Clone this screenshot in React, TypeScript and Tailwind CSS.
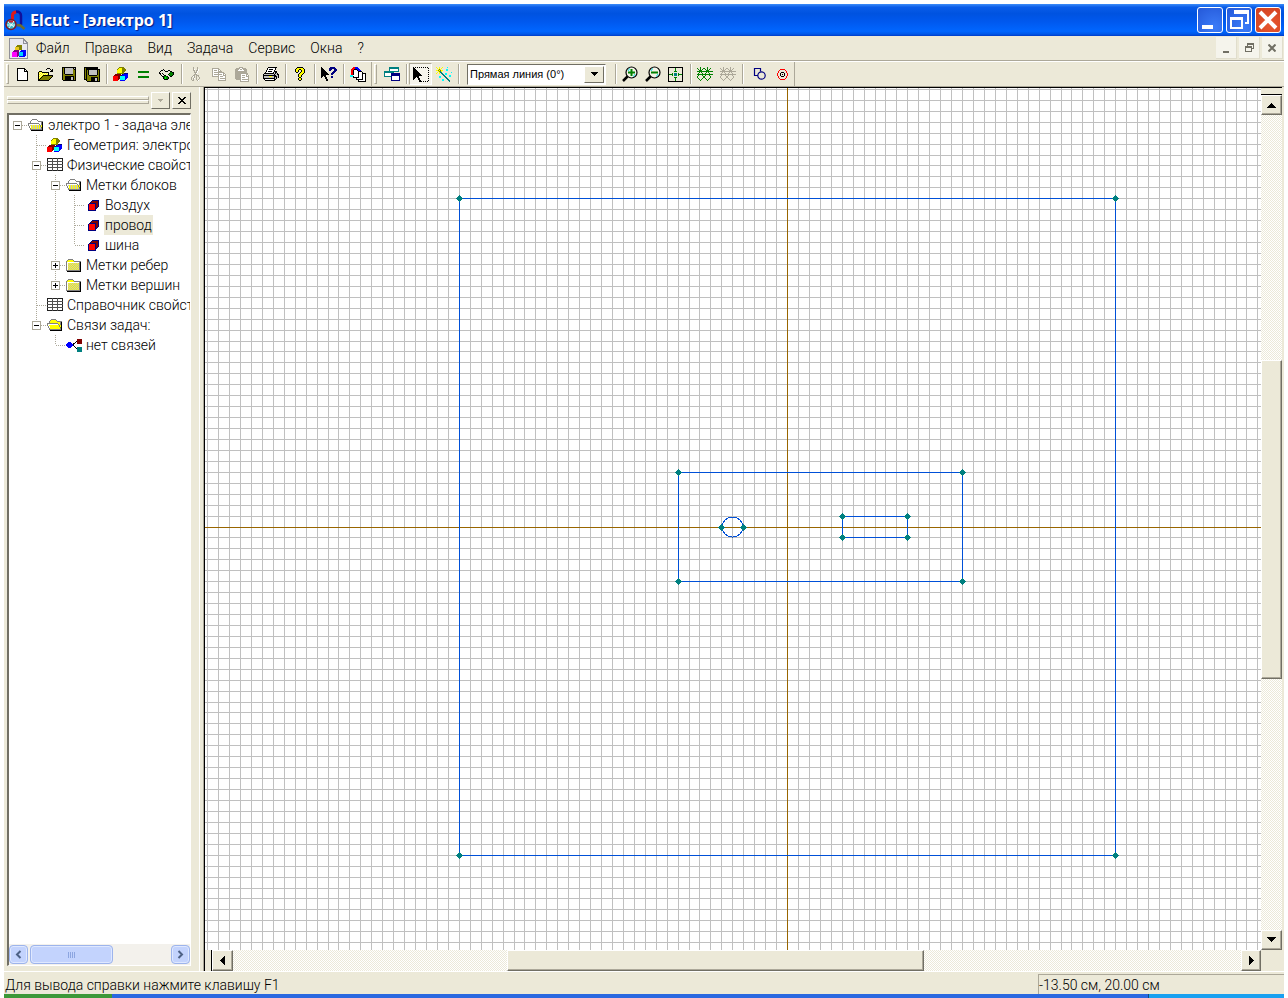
import React, { ReactNode } from "react";

/* ---------- pixel icons ---------- */

const PALETTE: Record<string, string> = {
  k: "#000000",
  w: "#ffffff",
  y: "#ffff00",
  o: "#808000",
  n: "#000080",
  b: "#0000ff",
  c: "#00ffff",
  t: "#008080",
  r: "#ff0000",
  m: "#800000",
  g: "#aca899",
  s: "#c0c0c0",
  d: "#808080",
  e: "#008000",
  l: "#00ff00",
  p: "#fff8a0",
};

function Pixels({ rows }: { rows: string[] }) {
  const width = Math.max(...rows.map((r) => r.length));
  return (
    <svg
      width={width}
      height={rows.length}
      viewBox={`0 0 ${width} ${rows.length}`}
      shapeRendering="crispEdges"
      className="shrink-0"
      aria-hidden="true"
    >
      {rows.flatMap((row, y) =>
        [...row].map((ch, x) =>
          PALETTE[ch] ? <rect key={`${x}-${y}`} x={x} y={y} width="1" height="1" fill={PALETTE[ch]} /> : null
        )
      )}
    </svg>
  );
}

const NEW = [
  "kkkkkkkk...",
  "kwwwwwwkk..",
  "kwwwwwwkwk.",
  "kwwwwwwkkkk",
  "kwwwwwwwwwk",
  "kwwwwwwwwwk",
  "kwwwwwwwwwk",
  "kwwwwwwwwwk",
  "kwwwwwwwwwk",
  "kwwwwwwwwwk",
  "kwwwwwwwwwk",
  "kwwwwwwwwwk",
  "kkkkkkkkkkk",
];
const OPEN = [
  ".........kkk...",
  "........k...k.k",
  ".............kk",
  ".kkk........kkk",
  "kypykkkkkkk....",
  "kpypypypypk....",
  "kypypypypyk....",
  "kpypykkkkkkkkkk",
  "kypykoooooooook",
  "kpykoooooooook.",
  "kykoooooooook..",
  "kkoooooooook...",
  "kkkkkkkkkkk....",
];
const SAVE = [
  "kkkkkkkkkkkkkk",
  "kokssssssssksk",
  "kokssssssssokk",
  "kokssssssssook",
  "kokssssssssook",
  "kokssssssssook",
  "kokssssssssook",
  "kookkkkkkkkook",
  "kooooooooooook",
  "kookkkkkkkkkok",
  "kookkkkkksskok",
  "kookkkkkksskok",
  "kookkkkkksskok",
  ".kkkkkkkkkkkkk",
];
const SAVE_ALL = [
  "kkkkkkkkkkkkkk..",
  "kokkkkkkkkkkkk..",
  "kokkkkkkkkkkkkkk",
  "kokoksssssssskok",
  "kokoksssssssskok",
  "kokoksssssssskok",
  "kokoksssssssskok",
  "kokoksssssssskok",
  "kokookkkkkkkkook",
  "kokooooooooooook",
  "kokooookkkkkkkok",
  "kokooookkkksskok",
  "kkkooookkkksskok",
  "..kooookkkksskok",
  "...kkkkkkkkkkkkk",
];
const BLOCKS = [
  "......ooooo....",
  ".....oyyyooo...",
  "....oyyyyoooo..",
  "....yyyyyoooo..",
  "....yyyyyooo...",
  "....yyyyyoo....",
  "....ooooooonnnn",
  "..mmmmmm.nbbbbb",
  ".mmmmmmmnbbbbbb",
  "rrrrrmmcccccbbb",
  "rrrrrmmcccccbbb",
  "rrrrrmmcccccbb.",
  "rrrrrm.cccccb..",
  "rrrrr..bbbbb...",
];
const EQUALS = ["eeeeeeeeeee", "eeeeeeeeeee", "...........", "...........", "...........", "eeeeeeeeeee", "eeeeeeeeeee"];
const GLASSES = [
  "....k..........",
  "..kk.k...kk....",
  ".k....kkk..kk..",
  "k..........eekk",
  "kk.k......keeek",
  ".k..k....kleeek",
  "..k..kk...keek.",
  "...kkeeek..kk..",
  "....keleek.....",
  "....keleek.....",
  ".....kkkk......",
];
const CUT = [
  "..g...g..",
  "..g...g..",
  "..gw..gw.",
  "..gg.ggw.",
  "...g.gw..",
  "...gggw..",
  "....gw...",
  "...ggg...",
  "..gg.ggg.",
  ".gwg.g.g.",
  "g..g.g..g",
  "g.gw.g..g",
  "g.g..g.g.",
  ".gg...gw.",
];
const COPY = [
  "ggggggg.......",
  "gwwwwwgg......",
  "gwgggwgwg.....",
  "gwwwwwgggg....",
  "gwgggggggggg..",
  "gwwwwwgwwwwgg.",
  "gwggggggggwgwg",
  "gwwwwwgwwwwggg",
  "gggggggwgggwwg",
  "......gwwwwwwg",
  "......gwgggggg",
  "......gwwwwwwg",
  "......gggggggg",
];
const PASTE = [
  ".....gggg......",
  "..ggggwwgggg...",
  ".ggggwggwgggg..",
  ".gggwwwwwwggg..",
  ".gggggggggggg..",
  ".gggggggggggg..",
  ".ggggggggggggg.",
  ".ggggggwwwwwgg.",
  ".ggggggwgggwgwg",
  ".ggggggwwwwwggg",
  ".ggggggwgggwwwg",
  ".ggggggwwwwwwwg",
  "..gggggwggggggg",
  "......gwwwwwwwg",
  "......ggggggggg",
];
const PRINT = [
  ".....kkkkkkkkk..",
  "....kwwwwwwwk...",
  "....kwkkkkwwk...",
  "...kwwwwwwwk....",
  "...kwkkkkwwkkk..",
  "..kwwwwwwwkskk..",
  ".kkkkkkkkkksksk.",
  "kssssssssssksskk",
  "kkkkkkkkkkkkkssk",
  "ksssssyyysskkksk",
  "kssssssssssksksk",
  "kkkkkkkkkkkksk..",
  ".kwwwwwwwwwkk...",
  "..kkkkkkkkkk....",
];
const HELP = [
  "..kkkkkk..",
  ".kyyyyyyk.",
  "kyyykkyyyk",
  "kyyk..kyyk",
  "kyyk..kyyk",
  ".kk..kyyyk",
  "....kyyyk.",
  "...kyyyk..",
  "...kyyk...",
  "...kyyk...",
  "....kk....",
  "...kyyk...",
  "...kyyk...",
  "....kk....",
];
const CONTEXT_HELP = [
  "k........nnnnn..",
  "kk......nnnnnnn.",
  "kkk.....nnn..nnn",
  "kkkk....nn...nnn",
  "kkkkk.......nnn.",
  "kkkkkk.....nnn..",
  "kkkkkkk...nnn...",
  "kkkkkkkk..nn....",
  "kkkkk...........",
  "kk.kk.....nn....",
  "k...kk....nn....",
  "....kk..........",
  ".....kk.........",
  ".....kk.........",
];
const STACK = [
  "...rrbbb........",
  "..rrrbbbb.......",
  ".rrrkkkbbb......",
  ".rrkwwwkbbb.....",
  ".rrkwwwwkkkk....",
  ".rrkwwwwkwwwk...",
  ".rrkwwwwkwwwkkkk",
  ".rrkwwwwkwwwkwwk",
  "cccwwwwwkwwwkwwk",
  "ccckwwwwkwwwkwwk",
  "...kkkkkkwwwkwwk",
  "......kwwwwwkwwk",
  "......kkkkkkkwwk",
  "........kwwwwwwk",
  "........kkkkkkkk",
];
const WINDOWS = [
  ".....tttttttttt.",
  ".....tttttttttt.",
  ".....twwwwwwwwt.",
  ".....twwwwwwwwt.",
  "ttttttttttttttt.",
  "tttttttttt......",
  "twwwwwwnnnnnnnnn",
  "twwwwwwnnnnnnnnn",
  "twwwwwwnnnnnnnnn",
  "tttttttnwwwwwwwn",
  ".......nwwwwwwwn",
  ".......nwwwwwwwn",
  ".......nwwwwwwwn",
  ".......nnnnnnnnn",
];
const ARROW = [
  "k.k.k.k.k.k.k.k.",
  "kk.............k",
  "kkk.............",
  "kkkk...........k",
  "kkkkk...........",
  "kkkkkk.........k",
  "kkkkkkk.........",
  "kkkkkkkk.......k",
  "kkkkkkkkk.......",
  "kkkkkk.........k",
  "kkk.kk..........",
  "kk...kk........k",
  "k....kk.........",
  "......kk.......k",
  "......kkk.k.k.k.",
];
const WAND = [
  "y..y..y....c....",
  ".y.y.y..........",
  "..yoy.....cc....",
  "yyoyoyy...cc....",
  "..yoty..........",
  ".y.ytt.........c",
  "y..y.tt..cc.....",
  "......tt.cc.....",
  ".......tt....cc.",
  "...cc...tt...cc.",
  "...cc....tt.....",
  "..........tt....",
  "......cc...tt...",
  "......cc....tt..",
  ".............t..",
];
const HEX = [
  "...rrrrr...",
  "..r.....r..",
  ".r.......r.",
  ".r..kkk..r.",
  "r..k...k..r",
  "r..k.k.k..r",
  "r..k...k..r",
  ".r..kkk..r.",
  ".r.......r.",
  "..r.....r..",
  "...rrrrr...",
];
const MESH = [
  "...e......e.....",
  "e..e..ee..e..e..",
  ".e.e.e..e.e.e...",
  "..eee....eee....",
  "eeeeeeeeeeeeeeee",
  "..e.e....e.e....",
  ".e...e..e...e...",
  "eeeeeeeeeeeeeeee",
  ".e...e..e...e...",
  "e.....ee.....e..",
  "e.....ee.....e..",
  ".e...e..e...e...",
  "..e.e....e.e....",
  "...e......e.....",
];
const MESH_OFF = MESH.map((row) => row.replaceAll("e", "g"));
const CUBE = [
  "....nnnnnnn",
  "...nmmmmmmn",
  "..nmmmmmmmn",
  ".nnnnnnnmmn",
  "nrrrrrrnmmn",
  "nrrrrrrnmmn",
  "nrrrrrrnmmn",
  "nrrrrrrnmn.",
  "nrrrrrrnn..",
  "nrrrrrrn...",
  "nnnnnnnn...",
];
const FOLDER = [
  "..ddddd........",
  ".dyyyyyd.......",
  "dyyyyyyyddddddd",
  "dwwwwwwwwwwwwdk",
  "dwysysysysysydk",
  "dwsysysysysysdk",
  "dwysysysysysydk",
  "dwsysysysysysdk",
  "dwysysysysysydk",
  "dwsysysysysysdk",
  "dwysysysysysydk",
  "ddddddddddddddk",
  ".kkkkkkkkkkkkkk",
];
const FOLDER_OPEN_Y = [
  "....ddddd......",
  "...dyyyyyd.....",
  "..dyyyyyyyddddd",
  "..dyyyyyyyyyydk",
  "dddddddddddyydk",
  "dwwwwwwwwwwdydk",
  "dwyyyyyyyyyydyk",
  ".dwyyyyyyyyydyk",
  ".dwyyyyyyyyyyok",
  "..dyyyyyyyyyydk",
  "..ddddddddddddk",
  "...kkkkkkkkkkkk",
];
const FOLDER_OPEN_G = FOLDER_OPEN_Y.map((row, i) =>
  [...row].map((ch, x) => (ch === "y" ? (i < 6 ? "w" : x % 2 ? "y" : "s") : ch)).join("")
);
const LINKS = [
  "...........mmmmm",
  "...........mmmmm",
  "..........kmmmmm",
  "..bbb....k.mmmmm",
  ".bbbbb.kk..mmmmm",
  "bbbbbbbk........",
  "bbbbbbbk........",
  ".bbbbb..k.......",
  "..bbb....k.ttttt",
  "..........kttttt",
  "...........ttttt",
  "...........ttttt",
  "...........ttttt",
];

function Table() {
  return (
    <svg width="16" height="14" shapeRendering="crispEdges" className="shrink-0" aria-hidden="true">
      <rect x="0.5" y="0.5" width="15" height="12" fill="#fff" stroke="#202020" />
      <path d="M0 3.5H16M0 6.5H16M0 9.5H16M5.5 0V13M10.5 0V13" stroke="#505050" />
    </svg>
  );
}

function Magnifier({ plus }: { plus?: boolean }) {
  return (
    <svg width="16" height="16" className="shrink-0" aria-hidden="true">
      <circle cx="9.5" cy="6.5" r="5.5" fill="#f4f4e8" stroke="#000" strokeWidth="1.2" />
      <path d="M5.5 10.5L1 15" stroke="#000" strokeWidth="2.5" />
      <path d="M6 5a4 4 0 0 1 2-2.5M13 8a4 4 0 0 1-2 2.500" stroke="#00e0e0" fill="none" />
      <path d={plus ? "M6 6.500H13M9.500 3V10" : "M6 6.500H13"} stroke="#008000" strokeWidth="2" />
    </svg>
  );
}

function FitGrid() {
  return (
    <svg width="15" height="15" shapeRendering="crispEdges" className="shrink-0" aria-hidden="true">
      <rect x="0.5" y="0.5" width="14" height="14" fill="none" stroke="#000" />
      <path d="M7.500 1V5M7.500 10V14M1 7.500H5M10 7.500H14" stroke="#008000" />
      <path d="M4.500 6V9M10.500 6V9M6 4.500H9M6 10.500H9" stroke="#008000" />
      <rect x="6" y="6" width="3" height="3" fill="#008080" />
    </svg>
  );
}

function Shapes() {
  return (
    <svg width="13" height="12" className="shrink-0" aria-hidden="true">
      <path d="M5 7.500H1.500V0.500H7.500V3.500" fill="none" stroke="#000080" strokeWidth="1.200" />
      <circle cx="8.500" cy="7.500" r="3.700" fill="none" stroke="#000080" strokeWidth="1.200" />
    </svg>
  );
}

function AppLogo() {
  return (
    <svg width="21" height="21" viewBox="0 0 21 21" className="shrink-0" aria-hidden="true">
      <path d="M7.500 11V5.500C7.500 3 9 2 11.500 2" fill="none" stroke="#e01818" strokeWidth="3" />
      <path d="M11 1.500C14 1.500 16 3 16 6V15" fill="none" stroke="#10109c" strokeWidth="2.500" />
      <path d="M12 15l3.500 .5 4 3.500" fill="none" stroke="#6c6c30" strokeWidth="2.500" />
      <circle cx="6" cy="14.500" r="5" fill="#38b8c8" stroke="#801828" strokeWidth="1.500" />
      <path d="M3 12l6 5M9 11l-5 7M2 15h8" stroke="#e8fcfc" strokeWidth="1" />
      <path d="M4 11.500h4" stroke="#d02030" strokeWidth="2" />
    </svg>
  );
}

function DocLogo() {
  return (
    <svg width="19" height="21" viewBox="0 0 19 21" shapeRendering="crispEdges" className="shrink-0" aria-hidden="true">
      <path d="M0.500 0.500H14L18.500 5V20.500H0.500Z" fill="#e8e8f0" stroke="#909098" />
      <path d="M14 1V5H18" fill="none" stroke="#909098" />
      <path d="M8 7H13V12H6V9Z" fill="#808000" />
      <path d="M6 9H10V12H6Z" fill="#e8c820" />
      <path d="M3 14L5 12H10V17L8 19H3Z" fill="#800080" />
      <rect x="3" y="14" width="5" height="5" fill="#ff00ff" />
      <path d="M10 14L12 12H17V17L15 19H10Z" fill="#0000ff" />
      <rect x="10" y="14" width="4" height="4" fill="#00d0ff" />
    </svg>
  );
}

/* ---------- toolbar parts ---------- */

const RAISED = "border border-t-white border-l-white border-r-[#716f64] border-b-[#716f64] bg-[#ece9d8]";

function Tool({ label, pressed, children }: { label: string; pressed?: boolean; children: ReactNode }) {
  return (
    <button
      type="button"
      aria-label={label}
      aria-pressed={pressed}
      className={
        pressed
          ? "flex h-[22px] w-[23px] shrink-0 items-center justify-center border border-t-[#aca899] border-l-[#aca899] border-r-white border-b-white bg-[#f6f4ec]"
          : "flex h-[22px] w-[23px] shrink-0 items-center justify-center"
      }
    >
      {children}
    </button>
  );
}

function Sep() {
  return (
    <span className="flex w-[6px] shrink-0 justify-end py-px pr-px">
      <span className="h-5 w-[2px] border-l border-l-[#aca899] border-r border-r-white" />
    </span>
  );
}

function Grip() {
  return <span className="my-px w-[3px] shrink-0 border border-t-white border-l-white border-r-[#aca899] border-b-[#aca899]" />;
}

function Toolbar() {
  return (
    <div className="flex h-[25px] shrink-0 items-stretch border-b border-[#aca899] bg-[#ece9d8]" role="toolbar" aria-label="Панель инструментов">
      <div className="flex items-center border-r border-[#aca899] pl-[2px]">
        <span className="flex h-[22px] w-[5px]"><Grip /></span>
        <Tool label="Создать"><Pixels rows={NEW} /></Tool>
        <Tool label="Открыть"><Pixels rows={OPEN} /></Tool>
        <Tool label="Сохранить"><Pixels rows={SAVE} /></Tool>
        <Tool label="Сохранить все"><Pixels rows={SAVE_ALL} /></Tool>
        <Sep />
        <Tool label="Геометрия"><Pixels rows={BLOCKS} /></Tool>
        <Tool label="Решить"><Pixels rows={EQUALS} /></Tool>
        <Tool label="Результаты"><Pixels rows={GLASSES} /></Tool>
        <Sep />
        <Tool label="Вырезать"><Pixels rows={CUT} /></Tool>
        <Tool label="Копировать"><Pixels rows={COPY} /></Tool>
        <Tool label="Вставить"><Pixels rows={PASTE} /></Tool>
        <Sep />
        <Tool label="Печать"><Pixels rows={PRINT} /></Tool>
        <Sep />
        <Tool label="Справка"><Pixels rows={HELP} /></Tool>
        <Sep />
        <Tool label="Что это такое"><Pixels rows={CONTEXT_HELP} /></Tool>
        <Sep />
        <Tool label="Свойства"><Pixels rows={STACK} /></Tool>
        <span className="w-[2px]" />
      </div>
      <div className="flex items-center border-r border-[#aca899] pl-[2px]">
        <span className="flex h-[22px] w-[6px]"><Grip /></span>
        <Tool label="Окна"><Pixels rows={WINDOWS} /></Tool>
        <Sep />
        <Tool label="Выделение" pressed><Pixels rows={ARROW} /></Tool>
        <Tool label="Вставка"><Pixels rows={WAND} /></Tool>
        <Sep />
        <span className="mx-[6px] flex h-[21px] w-[139px] border border-t-[#716f64] border-l-[#716f64] border-r-white border-b-white bg-white p-px">
          <select
            aria-label="Тип линии"
            className="min-w-0 flex-1 appearance-none bg-white pl-px font-['Liberation_Sans',sans-serif] text-[11px] leading-4 text-black outline-none"
          >
            <option>Прямая линия (0°)</option>
          </select>
          <span className={`flex w-5 items-center justify-center ${RAISED}`} aria-hidden="true">
            <Pixels rows={["kkkkkkk", ".kkkkk.", "..kkk..", "...k..."]} />
          </span>
        </span>
        <Sep />
        <Tool label="Увеличить"><Magnifier plus /></Tool>
        <Tool label="Уменьшить"><Magnifier /></Tool>
        <Tool label="Показать все"><FitGrid /></Tool>
        <Sep />
        <Tool label="Построить сетку"><Pixels rows={MESH} /></Tool>
        <Tool label="Удалить сетку"><Pixels rows={MESH_OFF} /></Tool>
        <Sep />
        <span className="w-[3px]" />
        <Tool label="Фигуры"><Shapes /></Tool>
        <Tool label="Метки"><Pixels rows={HEX} /></Tool>
      </div>
    </div>
  );
}

/* ---------- tree ---------- */

type Cell = "none" | "v" | "branch" | "corner" | "minus" | "minusTop" | "minusEnd" | "plus" | "plusEnd";

function Guide({ kind }: { kind: Cell }) {
  const box = kind.startsWith("minus") || kind.startsWith("plus");
  const up = kind !== "none" && kind !== "minusTop";
  const down = kind === "v" || kind === "branch" || kind === "minus" || kind === "plus";
  const across = box || kind === "branch" || kind === "corner";
  return (
    <svg width="19" height="20" shapeRendering="crispEdges" className="shrink-0" aria-hidden="true">
      <g stroke="#aca899" strokeDasharray="1 1" fill="none">
        {up && <path d="M8.5 0V10" />}
        {down && <path d="M8.5 10V20" />}
        {across && <path d="M9 10.5H19" />}
      </g>
      {box && (
        <>
          <rect x="4.5" y="6.5" width="8" height="8" fill="#fff" stroke="#aca899" />
          <path d={kind.startsWith("plus") ? "M6 10.5H11M8.5 8V13" : "M6 10.5H11"} stroke="#000" />
        </>
      )}
    </svg>
  );
}

interface Row {
  text: string;
  cells: Cell[];
  icon: ReactNode;
  selected?: boolean;
}

const cube = (
  <span className="pl-[3px]">
    <Pixels rows={CUBE} />
  </span>
);

const TREE: Row[] = [
  { text: "электро 1 - задача электростатики", cells: ["minusTop"], icon: <Pixels rows={FOLDER_OPEN_G} /> },
  { text: "Геометрия: электро 1", cells: ["none", "branch"], icon: <Pixels rows={BLOCKS} /> },
  { text: "Физические свойства", cells: ["none", "minus"], icon: <Table /> },
  { text: "Метки блоков", cells: ["none", "v", "minus"], icon: <Pixels rows={FOLDER_OPEN_G} /> },
  { text: "Воздух", cells: ["none", "v", "v", "branch"], icon: cube },
  { text: "провод", cells: ["none", "v", "v", "branch"], icon: cube, selected: true },
  { text: "шина", cells: ["none", "v", "v", "corner"], icon: cube },
  { text: "Метки ребер", cells: ["none", "v", "plus"], icon: <Pixels rows={FOLDER} /> },
  { text: "Метки вершин", cells: ["none", "v", "plusEnd"], icon: <Pixels rows={FOLDER} /> },
  { text: "Справочник свойств", cells: ["none", "branch"], icon: <Table /> },
  { text: "Связи задач:", cells: ["none", "minusEnd"], icon: <Pixels rows={FOLDER_OPEN_Y} /> },
  { text: "нет связей", cells: ["none", "none", "corner"], icon: <Pixels rows={LINKS} /> },
];

function LunaArrow({ left }: { left?: boolean }) {
  return (
    <button
      type="button"
      aria-label={left ? "Влево" : "Вправо"}
      className="flex w-[19px] shrink-0 items-center justify-center rounded-sm border border-[#9db4ec] bg-[#c3d3fd] shadow-[inset_0_0_0_1px_#dfe8ff]"
    >
      <svg width="7" height="9" aria-hidden="true">
        <path d={left ? "M5.5 1L2 4.500L5.500 8" : "M1.500 1L5 4.500L1.500 8"} fill="none" stroke="#4d6185" strokeWidth="2" />
      </svg>
    </button>
  );
}

function SidePanel() {
  return (
    <aside className="flex w-[196px] shrink-0 flex-col border-r border-white pb-[5px] pl-[3px] pr-2">
      <div className="flex h-[26px] items-center gap-[2px]">
        <span className="flex min-w-0 flex-1 flex-col">
          <span className="h-[4px] border border-t-white border-l-white border-r-[#aca899] border-b-[#aca899]" />
          <span className="h-[4px] border border-t-white border-l-white border-r-[#aca899] border-b-[#aca899]" />
        </span>
        <button type="button" aria-label="Меню панели" className={`flex h-[17px] w-[19px] items-center justify-center ${RAISED}`}>
          <Pixels rows={["ggggg", ".ggg.", "..g.."]} />
        </button>
        <button type="button" aria-label="Закрыть панель" className={`flex h-[17px] w-[19px] items-center justify-center ${RAISED}`}>
          <Pixels rows={["kk....kk", ".kk..kk.", "..kkkk..", "...kk...", "..kkkk..", ".kk..kk.", "kk....kk"]} />
        </button>
      </div>
      <div className="flex min-h-0 flex-1 flex-col border-t-2 border-l-2 border-r border-b border-t-[#716f64] border-l-[#716f64] border-r-white border-b-white bg-white">
        <ul className="min-h-0 flex-1 overflow-hidden">
          {TREE.map((row) => (
            <li key={row.text} className="flex h-5 items-center whitespace-nowrap">
              {row.cells.map((kind, i) => (
                <Guide key={i} kind={kind} />
              ))}
              <span className="flex w-[19px] shrink-0 items-center">{row.icon}</span>
              <span className={row.selected ? "bg-[#ece9d8] px-px leading-5" : "px-px leading-5"}>{row.text}</span>
            </li>
          ))}
        </ul>
        <div className="flex h-[21px] shrink-0 bg-[#f3f1ec] py-px">
          <LunaArrow left />
          <span className="ml-[2px] flex w-[83px] items-center justify-center gap-px rounded-sm border border-[#9db4ec] bg-[#c3d3fd] shadow-[inset_0_0_0_1px_#dfe8ff]">
            <span className="h-[6px] w-px bg-[#8ca5e0]" />
            <span className="h-[6px] w-px bg-[#8ca5e0]" />
            <span className="h-[6px] w-px bg-[#8ca5e0]" />
            <span className="h-[6px] w-px bg-[#8ca5e0]" />
          </span>
          <span className="flex-1" />
          <LunaArrow />
        </div>
      </div>
    </aside>
  );
}

/* ---------- drawing ---------- */

const STEP = 10.94;
const OX = 582;
const OY = 439;
const gx = (i: number) => OX + Math.round(i * STEP) + 0.5;
const gy = (i: number) => OY + Math.floor(i * STEP) + 0.5;
const INDEXES = Array.from({ length: 300 }, (_, i) => i - 60);
const GRID_PATH = INDEXES.map((i) => `M${gx(i)} 0V4000M0 ${gy(i)}H4000`).join("");

const BOXES = [
  { x1: -30, y1: -30, x2: 30, y2: 30 },
  { x1: -10, y1: -5, x2: 16, y2: 5 },
  { x1: 5, y1: -1, x2: 11, y2: 1 },
];

function Vertex({ x, y }: { x: number; y: number }) {
  return (
    <path
      d={`M${x - 0.5} ${y - 3.5}h1v7h-1zM${x - 1.5} ${y - 2.5}h3v5h-3zM${x - 2.5} ${y - 1.5}h5v3h-5zM${x - 3.5} ${y - 0.5}h7v1h-7z`}
      fill="#008080"
    />
  );
}

function Drawing() {
  return (
    <svg className="block min-w-0 flex-1 bg-white" shapeRendering="crispEdges" role="img" aria-label="Геометрическая модель">
      <path d={GRID_PATH} stroke="#c0c0c0" fill="none" />
      <path d={`M${gx(0)} 0V4000M0 ${gy(0)}H4000`} stroke="#996600" fill="none" />
      {BOXES.map((b) => (
        <path
          key={b.x1}
          d={`M${gx(b.x1)} ${gy(b.y1)}H${gx(b.x2)}V${gy(b.y2)}H${gx(b.x1)}Z`}
          fill="none"
          stroke="#0050d8"
        />
      ))}
      <ellipse cx={gx(-5)} cy={gy(0) - 0.5} rx="10.5" ry="10" fill="none" stroke="#0050d8" />
      {BOXES.flatMap((b) =>
        [b.x1, b.x2].flatMap((x) => [b.y1, b.y2].map((y) => <Vertex key={`${x},${y}`} x={gx(x)} y={gy(y)} />))
      )}
      <Vertex x={gx(-6)} y={gy(0)} />
      <Vertex x={gx(-4)} y={gy(0)} />
    </svg>
  );
}

const THUMB = `${RAISED} shadow-[inset_-1px_-1px_0_#aca899]`;
const TRACK = "bg-[repeating-conic-gradient(#ece9d8_0_25%,#ffffff_0_50%)] bg-[length:2px_2px]";

function Workspace() {
  return (
    <main className="flex min-w-0 flex-1 flex-col border-t border-l border-black">
      <div className="flex min-h-0 flex-1">
        <Drawing />
        <div className={`flex w-[21px] shrink-0 flex-col ${TRACK}`}>
          <span className="h-[7px] shrink-0 border-b border-black bg-[#ece9d8]" />
          <button type="button" aria-label="Вверх" className={`flex h-5 shrink-0 items-center justify-center ${THUMB}`}>
            <Pixels rows={["....k....", "...kkk...", "..kkkkk..", ".kkkkkkk.", "kkkkkkkkk"]} />
          </button>
          <span className="min-h-0 grow-[246]" />
          <span className={`grow-[317] ${THUMB}`} />
          <span className="min-h-0 grow-[252]" />
          <button type="button" aria-label="Вниз" className={`flex h-5 shrink-0 items-center justify-center ${THUMB}`}>
            <Pixels rows={["kkkkkkkkk", ".kkkkkkk.", "..kkkkk..", "...kkk...", "....k...."]} />
          </button>
        </div>
      </div>
      <div className="flex h-[21px] shrink-0">
        <div className={`flex min-w-0 flex-1 ${TRACK}`}>
          <span className="w-[7px] shrink-0 border-r border-black bg-[#ece9d8]" />
          <button type="button" aria-label="Влево" className={`flex w-[21px] shrink-0 items-center justify-center ${THUMB}`}>
            <Pixels rows={["....k", "...kk", "..kkk", ".kkkk", "kkkkk", ".kkkk", "..kkk", "...kk", "....k"]} />
          </button>
          <span className="grow-[275]" />
          <span className={`grow-[415] ${THUMB}`} />
          <span className="grow-[318]" />
          <button type="button" aria-label="Вправо" className={`flex w-5 shrink-0 items-center justify-center ${THUMB}`}>
            <Pixels rows={["k....", "kk...", "kkk..", "kkkk.", "kkkkk", "kkkk.", "kkk..", "kk...", "k...."]} />
          </button>
        </div>
        <span className="w-[21px] shrink-0 bg-[#ece9d8]" />
      </div>
    </main>
  );
}

/* ---------- window ---------- */

function TitleBar() {
  return (
    <header className="flex h-8 shrink-0 items-center bg-[linear-gradient(#3c8cf8_0%,#0a5ce8_10%,#0053e0_30%,#0058ee_55%,#0066ff_85%,#0058e8_94%,#003cc8_100%)] pl-px pr-[3px] text-white">
      <AppLogo />
      <h1 className="ml-1 flex-1 font-['Noto_Sans',sans-serif] text-base leading-6 font-bold [text-shadow:1px_1px_1px_#0a1883]">
        Elcut - [электро 1]
      </h1>
      <div className="flex gap-[3px]">
        <button type="button" aria-label="Свернуть" className="flex size-[26px] items-end rounded-[3px] border border-white bg-[radial-gradient(circle_at_70%_80%,#3c7cf8,#2458d8)] pb-[3px] pl-1">
          <span className="h-1 w-[11px] bg-white" />
        </button>
        <button type="button" aria-label="Восстановить" className="flex size-[26px] items-center justify-center rounded-[3px] border border-white bg-[radial-gradient(circle_at_70%_80%,#3c7cf8,#2458d8)]">
          <svg width="20" height="20" shapeRendering="crispEdges" aria-hidden="true">
            <path d="M6 4V1H19V13H16" fill="none" stroke="#fff" strokeWidth="2" />
            <path d="M6 2H20" stroke="#fff" strokeWidth="3" />
            <rect x="2" y="8" width="11" height="10" fill="none" stroke="#fff" strokeWidth="2" />
            <path d="M1 8.500H14" stroke="#fff" strokeWidth="3" />
          </svg>
        </button>
        <button type="button" aria-label="Закрыть" className="flex size-[26px] items-center justify-center rounded-[3px] border border-white bg-[radial-gradient(circle_at_60%_70%,#e85830,#d04020)]">
          <svg width="20" height="20" aria-hidden="true">
            <path d="M2 2L18 18M18 2L2 18" stroke="#fff" strokeWidth="4" />
          </svg>
        </button>
      </div>
    </header>
  );
}

const MENU = ["Файл", "Правка", "Вид", "Задача", "Сервис", "Окна", "?"];
const MDI = "flex h-[22px] w-[21px] items-center justify-center border-r border-b border-[#e0ddcc] bg-[#f5f4ec]";

function MenuBar() {
  return (
    <nav className="flex h-[26px] shrink-0 items-center border-b border-white bg-[#ece9d8] pb-px pl-[5px] shadow-[inset_0_-1px_0_#aca899]">
      <DocLogo />
      <div className="flex flex-1 gap-[15px] pl-2">
        {MENU.map((item) => (
          <button key={item} type="button" className="leading-5">
            {item}
          </button>
        ))}
      </div>
      <div className="flex gap-[2px] pr-px">
        <button type="button" aria-label="Свернуть документ" className={MDI}>
          <span className="mt-2 h-[2px] w-[6px] bg-[#716f64]" />
        </button>
        <button type="button" aria-label="Восстановить документ" className={MDI}>
          <svg width="9" height="9" shapeRendering="crispEdges" aria-hidden="true">
            <path d="M2.500 3V0.500H8.500V5.500H7M2 1H9M0 4H7" fill="none" stroke="#716f64" />
            <rect x="0.500" y="3.500" width="6" height="5" fill="none" stroke="#716f64" />
          </svg>
        </button>
        <button type="button" aria-label="Закрыть документ" className={MDI}>
          <svg width="8" height="8" aria-hidden="true">
            <path d="M0.500 0.500L7.500 7.500M7.500 0.500L0.500 7.500" stroke="#716f64" strokeWidth="2" />
          </svg>
        </button>
      </div>
    </nav>
  );
}

function StatusBar() {
  return (
    <footer className="flex h-[23px] shrink-0 border-t border-white bg-[#ece9d8] pt-[2px]">
      <p className="flex-1 border-t border-transparent pl-px leading-5">Для вывода справки нажмите клавишу F1</p>
      <p className="w-[246px] border-t border-l border-[#aca899] leading-5">-13.50 см, 20.00 см</p>
    </footer>
  );
}

export default function App() {
  return (
    <div className="flex h-screen flex-col overflow-hidden bg-white px-1 pt-1 font-[Roboto,sans-serif] text-sm font-light text-black">
      <TitleBar />
      <MenuBar />
      <Toolbar />
      <div className="flex min-h-0 flex-1 bg-[#ece9d8] pr-[2px]">
        <SidePanel />
        <span className="w-1 shrink-0 border-r border-[#aca899]" />
        <Workspace />
      </div>
      <StatusBar />
      <div className="flex h-1 shrink-0">
        <span className="w-[108px] bg-[#3c9838]" />
        <span className="flex-1 bg-[#2a68e0]" />
        <span className="w-[136px] border-l border-[#104880] bg-[#18a0f0]" />
      </div>
    </div>
  );
}
